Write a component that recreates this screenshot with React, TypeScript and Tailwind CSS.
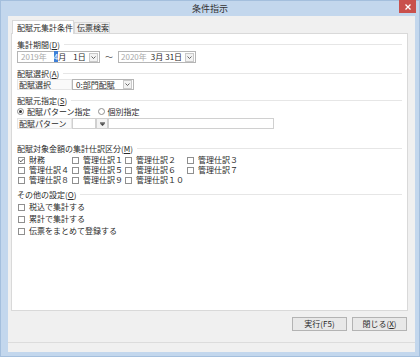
import { ReactNode } from "react";

const font = { fontFamily: '"Noto Sans CJK JP", "Noto Sans", sans-serif' };

function Mn({ children }: { children: ReactNode }) {
  return <span className="underline underline-offset-1">{children}</span>;
}

function GroupHeader({ label, keyChar }: { label: string; keyChar: string }) {
  return (
    <div className="flex items-center h-[11px] leading-[11px]">
      <span className="whitespace-nowrap shrink-0">
        {label}(<Mn>{keyChar}</Mn>)
      </span>
      <div className="flex-1 h-px bg-[#e6e6e6] ml-[4px]" />
    </div>
  );
}

function DropButton() {
  return (
    <div className="shrink-0 w-[9px] h-[9px] border border-[#c9c9c9] bg-[#f2f2f2] flex items-center justify-center">
      <svg width="5" height="3" viewBox="0 0 5 3">
        <path d="M0.5 0.5 L2.5 2.5 L4.5 0.5" stroke="#555" fill="none" strokeWidth="0.9" />
      </svg>
    </div>
  );
}

function CheckBox({ checked, label }: { checked?: boolean; label: string }) {
  return (
    <div className="flex items-center gap-[4px] whitespace-nowrap">
      <div className="shrink-0 w-[7px] h-[7px] border border-[#8f8f8f] bg-white flex items-center justify-center">
        {checked && (
          <svg width="6" height="5" viewBox="0 0 6 5">
            <path d="M0.6 2.4 L2.3 4 L5.4 0.7" stroke="#222" fill="none" strokeWidth="1" />
          </svg>
        )}
      </div>
      <span>{label}</span>
    </div>
  );
}

function Radio({ checked, label }: { checked?: boolean; label: string }) {
  return (
    <div className="flex items-center gap-[3px] whitespace-nowrap">
      <div className="shrink-0 w-[7px] h-[7px] rounded-full border border-[#8f8f8f] bg-white flex items-center justify-center">
        {checked && <div className="w-[3px] h-[3px] rounded-full bg-[#333]" />}
      </div>
      <span>{label}</span>
    </div>
  );
}

export default function App() {
  return (
    <div
      className="w-[420px] h-[357px] bg-[#c3d7ed] border border-[#a4bfdd] flex flex-col text-[8px] text-[#2a2a2a]"
      style={font}
    >
      {/* title bar */}
      <div className="relative h-[15px] flex items-center justify-center">
        <span className="text-[9px] text-[#333] leading-none">条件指示</span>
        <div className="absolute right-[3px] top-[-1px] w-[17px] h-[13px] bg-[#c9504c] flex items-center justify-center">
          <svg width="6" height="6" viewBox="0 0 6 6">
            <path d="M0.5 0.5 L5.5 5.5 M5.5 0.5 L0.5 5.5" stroke="#fff" strokeWidth="1.3" />
          </svg>
        </div>
      </div>

      {/* client area */}
      <div className="flex-1 ml-[7px] mr-[4px] mb-[4px] bg-[#f0f0f0] flex flex-col">
        <div className="flex items-end h-[13px] mt-[4px] ml-[4px]">
          <div className="relative z-10 -mb-px h-[14px] w-[62px] bg-white border border-b-0 border-[#d9d9d9] flex items-center pl-[4px] whitespace-nowrap">
            配賦元集計条件
          </div>
          <div className="h-[11px] w-[36px] bg-[#f0f0f0] border border-b-0 border-[#d9d9d9] flex items-center pl-[2px] whitespace-nowrap">
            伝票検索
          </div>
        </div>

        <div className="ml-[3px] w-[397px] h-[278px] bg-white border border-[#d9d9d9] pl-[5px] pr-[5px] pt-[5px] flex flex-col">
          <GroupHeader label="集計期間" keyChar="D" />
          <div className="flex items-center mt-[1px] h-[12px] whitespace-nowrap">
            <div className="w-[83px] h-[12px] border border-[#b5b5b5] flex items-center pl-[3px] pr-[1px]">
              <span className="text-[#a8a8a8]">2019年</span>
              <span className="ml-[7px]">
                <span className="bg-[#3d7fd8] text-white">4</span>月
              </span>
              <span className="ml-[7px]">1日</span>
              <div className="ml-auto">
                <DropButton />
              </div>
            </div>
            <span className="ml-[5px] text-[#555]">～</span>
            <div className="ml-[5px] w-[78px] h-[12px] border border-[#b5b5b5] flex items-center pl-[2px] pr-[1px]">
              <span className="text-[#a8a8a8]">2020年</span>
              <span className="ml-[4px]">3月</span>
              <span className="ml-[2px]">31日</span>
              <div className="ml-auto">
                <DropButton />
              </div>
            </div>
          </div>

          <div className="mt-[5px]">
            <GroupHeader label="配賦選択" keyChar="A" />
          </div>
          <div className="flex h-[11px] whitespace-nowrap">
            <div className="w-[55px] h-[11px] border border-[#e6e6e6] bg-[#fafafa] flex items-center pl-[1px]">
              配賦選択
            </div>
            <div className="w-[62px] h-[11px] border border-[#b5b5b5] flex items-center pl-[3px] pr-[1px]">
              <span>0:部門配賦</span>
              <div className="ml-auto">
                <DropButton />
              </div>
            </div>
          </div>

          <div className="mt-[5px]">
            <GroupHeader label="配賦元指定" keyChar="S" />
          </div>
          <div className="flex items-center h-[11px] gap-[7px]">
            <Radio checked label="配賦パターン指定" />
            <Radio label="個別指定" />
          </div>
          <div className="flex h-[11px] mt-[1px] whitespace-nowrap">
            <div className="w-[55px] h-[11px] border border-[#e6e6e6] bg-[#fafafa] flex items-center pl-[1px]">
              配賦パターン
            </div>
            <div className="w-[24px] h-[11px] border border-[#d0d0d0] bg-white" />
            <div className="w-[12px] h-[11px] border border-[#d0d0d0] bg-[#f3f3f3] flex items-center justify-center">
              <svg width="5" height="4" viewBox="0 0 5 4">
                <path d="M0 0.5 H5 M0.3 1.5 H4.7 L2.5 3.8 Z" stroke="#444" fill="#444" strokeWidth="0.6" />
              </svg>
            </div>
            <div className="w-[166px] h-[11px] border border-[#d0d0d0] bg-white" />
          </div>

          <div className="mt-[14px]">
            <GroupHeader label="配賦対象金額の集計仕訳区分" keyChar="M" />
          </div>
          <div className="grid grid-cols-[54px_53px_62px_auto] auto-rows-[10px] items-center mt-[1px] pl-[1px]">
            <CheckBox checked label="財務" />
            <CheckBox label="管理仕訳１" />
            <CheckBox label="管理仕訳２" />
            <CheckBox label="管理仕訳３" />
            <CheckBox label="管理仕訳４" />
            <CheckBox label="管理仕訳５" />
            <CheckBox label="管理仕訳６" />
            <CheckBox label="管理仕訳７" />
            <CheckBox label="管理仕訳８" />
            <CheckBox label="管理仕訳９" />
            <CheckBox label="管理仕訳１０" />
          </div>

          <div className="mt-[4px]">
            <GroupHeader label="その他の設定" keyChar="O" />
          </div>
          <div className="flex flex-col mt-[1px] pl-[1px]">
            <div className="h-[12px] flex items-center">
              <CheckBox label="税込で集計する" />
            </div>
            <div className="h-[12px] flex items-center">
              <CheckBox label="累計で集計する" />
            </div>
            <div className="h-[12px] flex items-center">
              <CheckBox label="伝票をまとめて登録する" />
            </div>
          </div>
        </div>

        <div className="flex justify-end gap-[5px] mt-[6px] pr-[8px]">
          <button className="w-[55px] h-[14px] border border-[#b3b3b3] bg-[#e8e8e8] flex items-center justify-center leading-none whitespace-nowrap">
            実行(F5)
          </button>
          <button className="w-[55px] h-[14px] border border-[#b3b3b3] bg-[#e8e8e8] flex items-center justify-center leading-none whitespace-nowrap">
            閉じる(<Mn>X</Mn>)
          </button>
        </div>

        <div className="mt-[11px] h-px bg-[#dcdcdc]" />
      </div>
    </div>
  );
}
